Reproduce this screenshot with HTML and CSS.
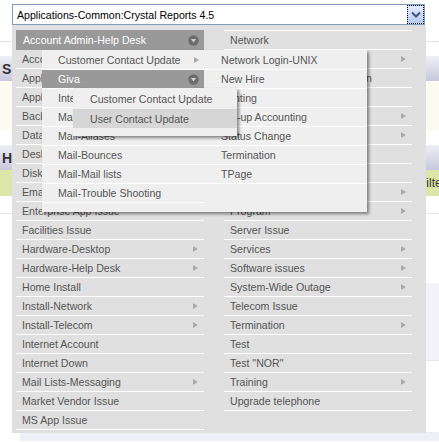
FILE: index.html
```html
<!DOCTYPE html>
<html>
<head>
<meta charset="utf-8">
<link rel="stylesheet" href="styles.css">
</head>
<body>
<div class="page">
  <div class="sp-top"></div>
  <div class="rule"></div>
  <div class="sp-a"></div>
  <div class="band-lav"><span class="letter">S</span></div>
  <div class="band-cream"></div>
  <div class="sp-b"></div>
  <div class="band-lav"><span class="letter">H</span></div>
  <div class="band-green"><span class="filter">Filter</span></div>
  <div class="sp-c"></div>
  <div class="rule"></div>
  <div class="sp-d"></div>
  <div class="band-pale"></div>
  <div class="rule rule-r"></div>
  <div class="sp-e"></div>
  <div class="band-bottom"></div>
</div>

<div class="widget">
  <div class="select">
    <span class="select-text">Applications-Common:Crystal Reports 4.5</span>
    <span class="select-btn"><svg width="10" height="7" viewBox="0 0 10 7"><path d="M1 1.5 L5 5.5 L9 1.5" fill="none" stroke="#3f5379" stroke-width="2"/></svg></span>
  </div>
  <div class="panel">
    <div class="col">
      <div class="hdr"><span>Account Admin-Help Desk</span><svg class="ico" width="11" height="11" viewBox="0 0 11 11"><circle cx="5.5" cy="5.5" r="5.2" fill="#6c6c6c"/><path d="M2.8 4 H8.2 L5.5 7.6 Z" fill="#cfcfcf"/></svg></div>
      <div class="row">Account Request</div>
      <div class="row">Application Support</div>
      <div class="row">Applications-Common</div>
      <div class="row">Backup/Restore</div>
      <div class="row">Database Issue</div>
      <div class="row">Desktop Support</div>
      <div class="row">Disk Space</div>
      <div class="row">Email Issue</div>
      <div class="row">Enterprise App Issue</div>
      <div class="row">Facilities Issue</div>
      <div class="row">Hardware-Desktop<i class="arr"></i></div>
      <div class="row">Hardware-Help Desk<i class="arr"></i></div>
      <div class="row">Home Install</div>
      <div class="row">Install-Network<i class="arr"></i></div>
      <div class="row">Install-Telecom<i class="arr"></i></div>
      <div class="row">Internet Account</div>
      <div class="row">Internet Down</div>
      <div class="row">Mail Lists-Messaging<i class="arr"></i></div>
      <div class="row">Market Vendor Issue</div>
      <div class="row">MS App Issue</div>
    </div>
    <div class="col col-r">
      <div class="row">Network</div>
      <div class="row">Network Hardware<i class="arr"></i></div>
      <div class="row">Network - Remote Connection</div>
      <div class="row">Network Security</div>
      <div class="row">Office Equipment<i class="arr"></i></div>
      <div class="row">Passwords<i class="arr"></i></div>
      <div class="row">PC Setup</div>
      <div class="row">Phones</div>
      <div class="row">Printers<i class="arr"></i></div>
      <div class="row">Program<i class="arr"></i></div>
      <div class="row">Server Issue</div>
      <div class="row">Services<i class="arr"></i></div>
      <div class="row">Software issues<i class="arr"></i></div>
      <div class="row">System-Wide Outage<i class="arr"></i></div>
      <div class="row">Telecom Issue</div>
      <div class="row">Termination<i class="arr"></i></div>
      <div class="row">Test</div>
      <div class="row">Test "NOR"</div>
      <div class="row">Training<i class="arr"></i></div>
      <div class="row">Upgrade telephone</div>
    </div>

    <div class="pop pop1">
      <div class="pcol pcol-l">
        <div class="prow">Customer Contact Update<i class="arr"></i></div>
        <div class="prow phdr"><span>Giva</span><svg class="ico" width="11" height="11" viewBox="0 0 11 11"><circle cx="5.5" cy="5.5" r="5.2" fill="#6c6c6c"/><path d="M2.8 4 H8.2 L5.5 7.6 Z" fill="#cfcfcf"/></svg></div>
        <div class="prow">Internet Access</div>
        <div class="prow">Mail-Account</div>
        <div class="prow">Mail-Aliases</div>
        <div class="prow">Mail-Bounces</div>
        <div class="prow">Mail-Mail lists</div>
        <div class="prow">Mail-Trouble Shooting</div>
      </div>
      <div class="pcol pcol-r">
        <div class="prow">Network Login-UNIX</div>
        <div class="prow">New Hire</div>
        <div class="prow">Printing</div>
        <div class="prow">Set-up Accounting</div>
        <div class="prow">Status Change</div>
        <div class="prow">Termination</div>
        <div class="prow">TPage</div>
      </div>
    </div>

    <div class="pop pop2">
      <div class="qrow">Customer Contact Update</div>
      <div class="qrow qsel">User Contact Update</div>
    </div>
  </div>
</div>
</body>
</html>
```

FILE: styles.css
```css
* { box-sizing: border-box; margin: 0; padding: 0; }
html, body { width: 439px; height: 442px; overflow: hidden; background: #fff; }
body {
  position: relative;
  font-family: "Liberation Sans", Arial, sans-serif;
  font-size: 10.6px;
  color: #555;
}

/* background page */
.page { display: flex; flex-direction: column; }
.sp-top { height: 41px; }
.rule { height: 1px; background: #e4e4ee; }
.rule-r { margin-left: 100px; }
.sp-a { height: 14px; }
.band-lav {
  height: 25px;
  background: linear-gradient(#eeeef7, #c8c8dd);
  display: flex;
  align-items: center;
  padding-left: 2px;
}
.letter { font-weight: bold; font-size: 14px; color: #333; }
.band-cream { height: 49px; background: #fbfbf1; }
.sp-b { height: 15px; }
.band-green {
  height: 26px;
  background: #dde6a9;
  display: flex;
  align-items: center;
  padding-left: 419px;
  white-space: nowrap;
  overflow: hidden;
}
.filter { font-size: 12px; color: #333; }
.sp-c { height: 17px; }
.sp-d { height: 69px; }
.band-pale { height: 77px; background: #f3f3f9; margin-left: 100px; }
.sp-e { height: 71px; }
.band-bottom { height: 9px; background: #efeff7; margin-left: 20px; }

/* widget */
.widget {
  position: absolute;
  top: 4px;
  left: 12px;
  width: 414px;
}
.select {
  width: 413px;
  height: 21px;
  border: 1px solid #7f9db9;
  background: #fff;
  display: flex;
  align-items: center;
  justify-content: space-between;
  padding: 0 0 0 4px;
}
.select-text { color: #000; font-size: 10.6px; }
.select-btn {
  width: 17px;
  height: 19px;
  border: 1px dotted #000;
  background: linear-gradient(#e3ebfd, #b8cbf5);
  display: flex;
  align-items: center;
  justify-content: center;
}

.panel {
  position: relative;
  width: 414px;
  height: 408px;
  background: #e0e0e0;
  padding: 5px 14px 3px 4px;
  display: flex;
  gap: 20px;
  align-items: flex-start;
}
.col { width: 188px; display: flex; flex-direction: column; }
.col-r { border-top: 1px solid #fff; }

.row {
  height: 19px;
  border-bottom: 1px solid #fff;
  display: flex;
  align-items: center;
  justify-content: space-between;
  padding: 0 6px 0 6px;
  white-space: nowrap;
}
.hdr {
  height: 20px;
  background: #999;
  color: #fff;
  display: flex;
  align-items: center;
  justify-content: space-between;
  padding: 0 5px 0 7px;
}
.ico { display: block; }
.arr {
  display: block;
  width: 0;
  height: 0;
  border-left: 5px solid #aaa;
  border-top: 3.5px solid transparent;
  border-bottom: 3.5px solid transparent;
}

/* popups */
.pop {
  position: absolute;
  background: #efefef;
  box-shadow: 2px 2px 3px rgba(0, 0, 0, 0.45);
}
.pop1 {
  left: 30px;
  top: 25px;
  width: 325px;
  height: 162px;
  display: flex;
  align-items: flex-start;
  padding-top: 1px;
}
.pcol { display: flex; flex-direction: column; }
.pcol-l { width: 162px; }
.pcol-r { width: 163px; }
.prow {
  height: 19px;
  border-bottom: 1px solid #fff;
  display: flex;
  align-items: center;
  justify-content: space-between;
  padding: 0 5px 0 16px;
  white-space: nowrap;
}
.pcol-r .prow { padding-left: 17px; }
.phdr { background: #999; color: #fff; }

.pop2 {
  left: 61px;
  top: 63px;
  width: 164px;
  height: 48px;
  display: flex;
  flex-direction: column;
  padding-top: 1px;
}
.qrow {
  height: 19px;
  display: flex;
  align-items: center;
  padding-left: 17px;
  white-space: nowrap;
}
.qsel { background: #d6d6d6; margin-top: 1px; }
```
